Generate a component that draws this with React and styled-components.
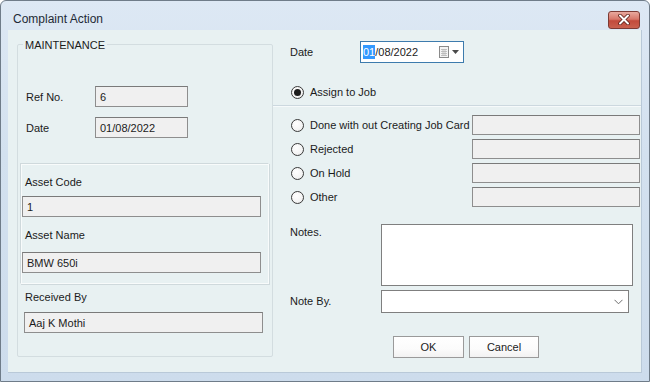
import React from "react";
import styled, { createGlobalStyle } from "styled-components";

const Global = createGlobalStyle`
  html, body { margin: 0; padding: 0; background: #fff; }
  body { font-family: "Liberation Sans", Arial, sans-serif; font-size: 11px; color: #1b1b1b; }
  * { box-sizing: border-box; }
`;

const CLIENT = "#e8f1f2";

const Window = styled.div`
  width: 650px;
  height: 382px;
  display: flex;
  flex-direction: column;
  background: linear-gradient(180deg, #dde8f4 0%, #d3e1ef 40%, #cddcec 100%);
  border: 1px solid #6f7c89;
  border-radius: 6px 6px 0 0;
  overflow: hidden;
`;

const TitleBar = styled.div`
  height: 29px;
  flex: none;
  display: flex;
  align-items: center;
  justify-content: space-between;
  padding: 0 9px 0 12px;
`;

const Title = styled.span`
  font-size: 12px;
  color: #1e2a36;
  padding-top: 7px;
`;

const CloseBtn = styled.div`
  width: 32px;
  height: 18px;
  margin-top: 8px;
  border: 1px solid #7d3a34;
  border-radius: 3px;
  background: linear-gradient(180deg, #e9a99e 0%, #d7776a 45%, #c24a3c 55%, #c9604f 100%);
  display: flex;
  align-items: center;
  justify-content: center;
`;

const Frame = styled.div`
  flex: 1;
  padding: 0 7px 8px 7px;
  display: flex;
`;

const Client = styled.div`
  flex: 1;
  background: ${CLIENT};
  border-right: 1px solid #b9c9d8;
  border-bottom: 1px solid #b9c9d8;
  display: grid;
  grid-template-columns: 265px 1fr;
`;

const LeftCol = styled.div`
  padding: 14px 0 0 9px;
`;

const Group = styled.div`
  width: 256px;
  height: 313px;
  border: 1px solid #d3dde0;
  border-radius: 2px;
  display: flex;
  flex-direction: column;
`;

const GroupTitle = styled.span`
  align-self: flex-start;
  margin: -7px 0 0 5px;
  padding: 0 2px;
  line-height: 15px;
  background: ${CLIENT};
  font-size: 11px;
  color: #1b1b1b;
`;

const FieldRow = styled.div`
  display: flex;
  align-items: center;
  margin-top: ${(p) => p.$mt}px;
  padding-left: ${(p) => p.$pl || 0}px;
`;

const Label = styled.span`
  width: ${(p) => (p.$w ? p.$w + "px" : "auto")};
  flex: none;
  line-height: 14px;
  font-size: 11px;
  color: #1b1b1b;
`;

const ReadBox = styled.div`
  width: ${(p) => p.$w}px;
  height: ${(p) => p.$h || 21}px;
  margin-left: ${(p) => p.$ml || 0}px;
  margin-top: ${(p) => p.$mt || 0}px;
  flex: none;
  background: #f0f0f0;
  border: 1px solid #8e8e8e;
  border-top-color: #7a7a7a;
  display: flex;
  align-items: center;
  padding-left: 4px;
  font-size: 11px;
  color: #1b1b1b;
`;

const AssetPanel = styled.div`
  margin: 25px 3px 0 2px;
  border-top: 1px solid #cfd9dc;
  border-left: 1px solid #cfd9dc;
  border-right: 1px solid #f8fbfb;
  border-bottom: 1px solid #f8fbfb;
  box-shadow: inset 1px 1px 0 #f8fbfb, 1px 1px 0 #cfd9dc;
  padding: 11px 0 10px 0;
  display: flex;
  flex-direction: column;
`;

const StackLabel = styled.span`
  line-height: 14px;
  font-size: 11px;
  padding-left: ${(p) => p.$pl}px;
  margin-top: ${(p) => p.$mt || 0}px;
  color: #1b1b1b;
`;

const RightCol = styled.div`
  display: flex;
  flex-direction: column;
`;

const TopArea = styled.div`
  height: 75px;
  flex: none;
  display: flex;
  flex-direction: column;
  padding: 11px 0 0 17px;
`;

const DateRow = styled.div`
  display: flex;
  align-items: center;
`;

const DatePicker = styled.div`
  width: 104px;
  height: 22px;
  border: 1px solid #3d7bad;
  background: #fff;
  display: flex;
  align-items: center;
  padding-left: 2px;
  font-size: 11px;
`;

const Sel = styled.span`
  background: #3399ff;
  color: #fff;
  line-height: 14px;
`;

const PickerIcons = styled.div`
  margin-left: auto;
  margin-right: 4px;
  display: flex;
  align-items: center;
  gap: 3px;
`;

const RadioWrap = styled.label`
  display: flex;
  align-items: center;
  gap: 6px;
  margin-top: ${(p) => p.$mt || 0}px;
  margin-left: ${(p) => p.$ml || 0}px;
  font-size: 11px;
  color: #1b1b1b;
  line-height: 14px;
`;

const RadioCircle = styled.span`
  width: 13px;
  height: 13px;
  flex: none;
  border-radius: 50%;
  border: 1px solid #3a3a3a;
  background: radial-gradient(circle at 40% 35%, #ffffff 0%, #f4f4f4 60%, #dcdcdc 100%);
  display: flex;
  align-items: center;
  justify-content: center;
`;

const RadioDot = styled.span`
  width: 7px;
  height: 7px;
  border-radius: 50%;
  background: #1c1c1c;
`;

const OptionsPanel = styled.div`
  flex: 1;
  border-top: 1px solid #ccd8df;
  box-shadow: inset 0 1px 0 #f6fafb;
  display: flex;
  flex-direction: column;
  padding-top: 9px;
`;

const OptionRow = styled.div`
  display: grid;
  grid-template-columns: 181px 168px;
  align-items: center;
  padding-left: 18px;
  margin-bottom: 4px;
`;

const NotesRow = styled.div`
  display: flex;
  align-items: ${(p) => p.$align || "center"};
  padding-left: 17px;
  margin-top: ${(p) => p.$mt}px;
`;

const NotesBox = styled.div`
  width: 252px;
  height: 62px;
  background: #fff;
  border: 1px solid #7f7f7f;
`;

const NotesLabel = styled.span`
  width: 91px;
  flex: none;
  font-size: 11px;
  line-height: 14px;
  padding-top: ${(p) => p.$pt || 0}px;
  padding-bottom: ${(p) => p.$pb || 0}px;
`;

const Select = styled.div`
  width: 248px;
  height: 23px;
  background: #fff;
  border: 1px solid #7f7f7f;
  display: flex;
  align-items: center;
  justify-content: flex-end;
  padding-right: 5px;
`;

const ButtonRow = styled.div`
  display: flex;
  gap: 5px;
  padding-left: 120px;
  margin-top: 23px;
`;

const Button = styled.div`
  width: ${(p) => p.$w}px;
  height: 22px;
  background: linear-gradient(180deg, #ffffff 0%, #fbfbfb 60%, #f2f2f2 100%);
  border: 1px solid #9a9a9a;
  display: flex;
  align-items: center;
  justify-content: center;
  font-size: 11px;
  color: #1b1b1b;
`;

const Radio = ({ checked, children, mt, ml }) => (
  <RadioWrap $mt={mt} $ml={ml}>
    <RadioCircle>{checked && <RadioDot />}</RadioCircle>
    <span>{children}</span>
  </RadioWrap>
);

const options = ["Done with out Creating Job Card", "Rejected", "On Hold", "Other"];

export default function App() {
  return (
    <>
      <Global />
      <Window>
        <TitleBar>
          <Title>Complaint Action</Title>
          <CloseBtn>
            <svg width="14" height="11" viewBox="0 0 14 11">
              <path d="M3 1.5 L11 9.5 M11 1.5 L3 9.5" stroke="#5a1d17" strokeWidth="3.6" strokeLinecap="round" />
              <path d="M3 1.5 L11 9.5 M11 1.5 L3 9.5" stroke="#ffffff" strokeWidth="2" strokeLinecap="round" />
            </svg>
          </CloseBtn>
        </TitleBar>
        <Frame>
          <Client>
            <LeftCol>
              <Group>
                <GroupTitle>MAINTENANCE</GroupTitle>
                <FieldRow $mt={33} $pl={8}>
                  <Label $w={69}>Ref No.</Label>
                  <ReadBox $w={93}>6</ReadBox>
                </FieldRow>
                <FieldRow $mt={10} $pl={8}>
                  <Label $w={69}>Date</Label>
                  <ReadBox $w={93}>01/08/2022</ReadBox>
                </FieldRow>
                <AssetPanel>
                  <StackLabel $pl={4}>Asset Code</StackLabel>
                  <ReadBox $w={239} $ml={1} $mt={7}>1</ReadBox>
                  <StackLabel $pl={4} $mt={11}>Asset Name</StackLabel>
                  <ReadBox $w={239} $ml={1} $mt={10}>BMW 650i</ReadBox>
                </AssetPanel>
                <StackLabel $pl={7} $mt={6}>Received By</StackLabel>
                <ReadBox $w={239} $ml={6} $mt={8}>Aaj K Mothi</ReadBox>
              </Group>
            </LeftCol>
            <RightCol>
              <TopArea>
                <DateRow>
                  <Label $w={70}>Date</Label>
                  <DatePicker>
                    <Sel>01</Sel>/08/2022
                    <PickerIcons>
                      <svg width="10" height="12" viewBox="0 0 10 12">
                        <rect x="0.5" y="0.5" width="9" height="11" fill="#f4f4f4" stroke="#8a8a8a" />
                        <path d="M2 3.5H8M2 5.5H8M2 7.5H8M2 9.5H8M4 3V10M6 3V10" stroke="#b5b5b5" strokeWidth="0.8" />
                      </svg>
                      <svg width="7" height="4" viewBox="0 0 7 4">
                        <path d="M0 0H7L3.5 4Z" fill="#4a4a4a" />
                      </svg>
                    </PickerIcons>
                  </DatePicker>
                </DateRow>
                <Radio checked mt={22} ml={1}>Assign to Job</Radio>
              </TopArea>
              <OptionsPanel>
                {options.map((o) => (
                  <OptionRow key={o}>
                    <Radio>{o}</Radio>
                    <ReadBox $w={168} $h={20} />
                  </OptionRow>
                ))}
                <NotesRow $mt={13} $align="flex-start">
                  <NotesLabel $pt={1}>Notes.</NotesLabel>
                  <NotesBox />
                </NotesRow>
                <NotesRow $mt={4}>
                  <NotesLabel $pb={2}>Note By.</NotesLabel>
                  <Select>
                    <svg width="9" height="6" viewBox="0 0 9 6">
                      <path d="M0.5 0.8L4.5 4.8L8.5 0.8" fill="none" stroke="#6e6e6e" strokeWidth="1" />
                    </svg>
                  </Select>
                </NotesRow>
                <ButtonRow>
                  <Button $w={71}>OK</Button>
                  <Button $w={70}>Cancel</Button>
                </ButtonRow>
              </OptionsPanel>
            </RightCol>
          </Client>
        </Frame>
      </Window>
    </>
  );
}
